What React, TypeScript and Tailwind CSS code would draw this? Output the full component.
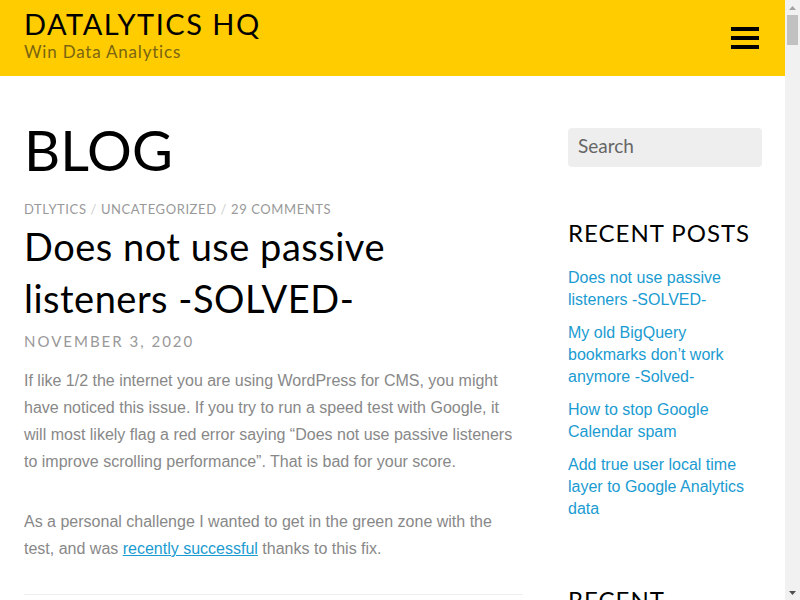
const heading = { fontFamily: "Lato, 'Noto Sans', sans-serif" };
const body = { fontFamily: "'Liberation Sans', Arial, sans-serif" };

const recentPosts = [
    "Does not use passive listeners -SOLVED-",
    "My old BigQuery bookmarks don’t work anymore -Solved-",
    "How to stop Google Calendar spam",
    "Add true user local time layer to Google Analytics data",
];

const App = () => {
    return (
        <div className="flex h-[600px] overflow-hidden bg-white">
            <div className="w-[785px] shrink-0">
                {/* Header */}
                <header className="bg-[#ffcc00] h-[76px] flex justify-between pl-6 pr-[26px]" style={heading}>
                    <div className="pt-[7px]">
                        <h1 className="text-[29px] leading-[34px] text-black tracking-[1.5px]">DATALYTICS HQ</h1>
                        <p className="text-[17px] leading-[22px] text-[#7a6512] tracking-[0.8px]">Win Data Analytics</p>
                    </div>
                    <div className="pt-[27px] flex flex-col gap-[5px]">
                        <span className="block w-[28px] h-[4px] bg-black" />
                        <span className="block w-[28px] h-[4px] bg-black" />
                        <span className="block w-[28px] h-[4px] bg-black" />
                    </div>
                </header>

                <div className="flex px-6 gap-[45px]">
                    {/* Main column */}
                    <main className="w-[499px] shrink-0 pt-[48px]" style={body}>
                        <h2 className="text-[56px] leading-[56px] text-black -mt-[2px]" style={heading}>BLOG</h2>
                        <div className="mt-[22px] text-[13px] leading-[18px] text-[#999] tracking-[0.6px]" style={heading}>
                            DTLYTICS <span className="text-[#ccc]">/</span> UNCATEGORIZED <span className="text-[#ccc]">/</span> 29 COMMENTS
                        </div>
                        <h3 className="mt-[2px] max-w-[420px] text-[38px] leading-[52px] text-black tracking-[0.5px]" style={heading}>
                            Does not use passive listeners -SOLVED-
                        </h3>
                        <div className="mt-[6px] text-[15px] leading-[22px] text-[#999] tracking-[2px]" style={heading}>NOVEMBER 3, 2020</div>
                        <p className="mt-[15px] text-[16px] leading-[27px] text-[#888]">
                            If like 1/2 the internet you are using WordPress for CMS, you might have noticed this issue. If you try to run a speed test with Google, it will most likely flag a red error saying “Does not use passive listeners to improve scrolling performance”. That is bad for your score.
                        </p>
                        <p className="mt-[33px] text-[16px] leading-[27px] text-[#888]">
                            As a personal challenge I wanted to get in the green zone with the test, and was{" "}
                            <a href="#" className="text-[#1a9bd1] underline">recently successful</a> thanks to this fix.
                        </p>
                        <hr className="mt-[32px] border-t border-[#eee]" />
                    </main>

                    {/* Sidebar */}
                    <aside className="w-[194px] shrink-0 pt-[52px]">
                        <div className="h-[39px] rounded bg-[#eee] flex items-center px-[10px] pb-[2px] text-[19px] text-[#666]" style={heading}>
                            Search
                        </div>
                        <h4 className="mt-[50px] text-[24px] leading-[32px] text-black tracking-[1px]" style={heading}>RECENT POSTS</h4>
                        <ul className="mt-[18px] flex flex-col gap-[11px]" style={body}>
                            {recentPosts.map((post, index) => (
                                <li key={index} className="text-[16px] leading-[22px] text-[#1a9bd1]">
                                    <a href="#">{post}</a>
                                </li>
                            ))}
                        </ul>
                        <h4 className="mt-[64px] text-[24px] leading-[32px] text-black tracking-[1px]" style={heading}>RECENT COMMENTS</h4>
                    </aside>
                </div>
            </div>

            {/* Scrollbar */}
            <div className="w-[15px] shrink-0 bg-[#f1f1f1] flex flex-col items-center justify-between">
                <div className="flex flex-col items-center w-full">
                    <div className="h-[15px] flex items-center justify-center">
                        <svg width="7" height="4" viewBox="0 0 7 4"><path d="M0 4 L3.5 0 L7 4 Z" fill="#a3a3a3" /></svg>
                    </div>
                    <div className="w-[11px] h-[30px] bg-[#c1c1c1]" />
                </div>
                <div className="h-[15px] flex items-center justify-center">
                    <svg width="7" height="4" viewBox="0 0 7 4"><path d="M0 0 L3.5 4 L7 0 Z" fill="#505050" /></svg>
                </div>
            </div>
        </div>
    );
};

export default App;
